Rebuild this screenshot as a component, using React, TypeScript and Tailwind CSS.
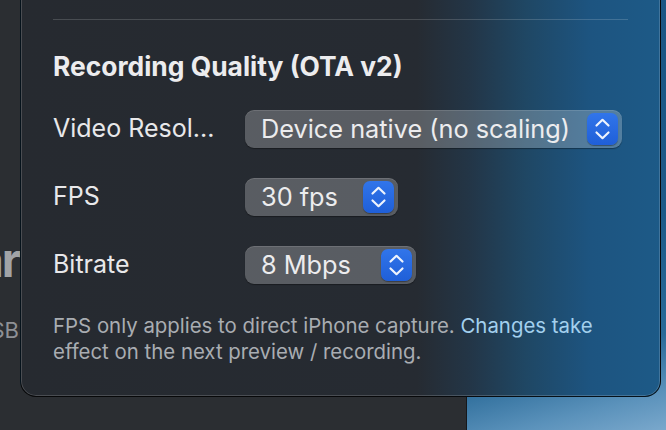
import React from "react";

function Stepper() {
  return (
    <div className="ml-auto w-[31px] h-[32px] rounded-[7px] bg-[linear-gradient(180deg,#3175ea_0%,#1f5fd8_100%)] shadow-[0_1px_1px_rgba(0,0,0,0.35)] flex items-center justify-center">
      <svg width="31" height="32" viewBox="0 0 31 32" fill="none">
        <path d="M9.5 12.5 L15.5 6.8 L21.5 12.5" stroke="white" strokeOpacity="0.92" strokeWidth="2.2" strokeLinecap="round" strokeLinejoin="round" />
        <path d="M9.5 19.5 L15.5 25.2 L21.5 19.5" stroke="white" strokeOpacity="0.92" strokeWidth="2.2" strokeLinecap="round" strokeLinejoin="round" />
      </svg>
    </div>
  );
}

function Popup({ value, width }: { value: string; width: string }) {
  return (
    <div
      className={`${width} h-[38px] rounded-[9px] bg-white/[0.24] shadow-[inset_0_1px_0_rgba(255,255,255,0.12),0_1px_1px_rgba(0,0,0,0.35)] flex items-center pl-[16px] pr-[4px] text-[25.3px] text-[#ececee] whitespace-nowrap`}
    >
      <span>{value}</span>
      <Stepper />
    </div>
  );
}

function Row({ label, value, width }: { label: string; value: string; width: string }) {
  return (
    <div className="flex items-center h-[38px]">
      <div className="w-[192px] text-[25px] text-[#e8e8ea] whitespace-nowrap">{label}</div>
      <Popup value={value} width={width} />
    </div>
  );
}

export default function App() {
  return (
    <div className="relative w-[666px] h-[430px] overflow-hidden flex font-['Inter',sans-serif]">
      <div className="w-[467px] h-full bg-[#2b2e32] border-r border-[#16181b] flex flex-col">
        <div className="w-[19px] flex flex-col items-end">
          <div className="mt-[234px] text-[47px] leading-[52px] font-bold tracking-[-2px] text-[#a2a4a7] whitespace-nowrap">Webinar</div>
          <div className="mt-[30px] text-[22px] leading-[28px] text-[#8e9196] whitespace-nowrap">USB</div>
        </div>
      </div>
      <div className="flex-1 h-full bg-[linear-gradient(165deg,#1b5583_0%,#1d5a88_55%,#2a6a98_80%,#5b92bb_92%,#7aa8cc_100%)]" />

      <div className="absolute left-[20px] top-[-30px] w-[641px] h-[427px] rounded-[16px] border border-black/80 shadow-[inset_0_0_0_1px_rgba(255,255,255,0.17)] bg-[linear-gradient(90deg,#262a30_0%,#262b32_62%,#233546_70%,#1f4764_79%,#1d5480_89%,#1d5a87_100%)] px-[32px] pt-[48px]">
        <div className="h-px bg-white/[0.16]" />
        <div className="mt-[30px] text-[26.4px] leading-[32px] font-bold text-[#ececee] whitespace-nowrap">
          Recording Quality (OTA v2)
        </div>
        <div className="mt-[28px] flex flex-col gap-[30px]">
          <Row label="Video Resol..." value="Device native (no scaling)" width="w-[377px]" />
          <Row label="FPS" value="30 fps" width="w-[153px]" />
          <Row label="Bitrate" value="8 Mbps" width="w-[171px]" />
        </div>
        <div className="mt-[29px] text-[20.4px] leading-[26px] text-[#a9adb2] whitespace-nowrap">
          FPS only applies to direct iPhone capture. <span className="text-[#a3d0ee]">Changes take</span>
          <br />
          effect on the next preview / recording.
        </div>
      </div>
    </div>
  );
}
